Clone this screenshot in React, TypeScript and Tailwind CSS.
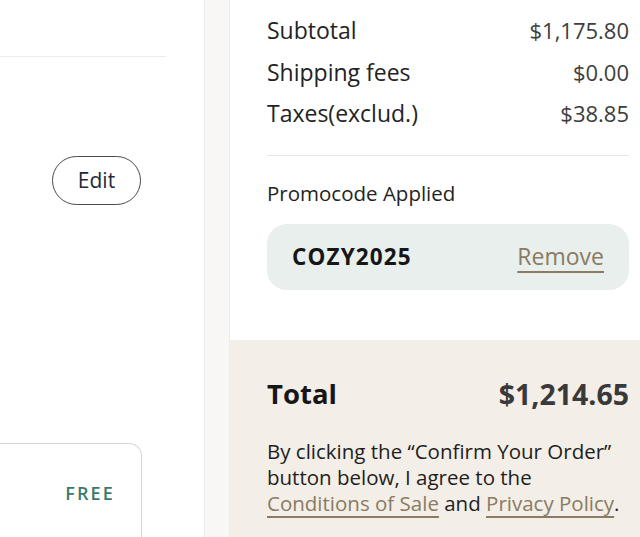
export default function App() {
  const rows = [
    { label: "Subtotal", value: "$1,175.80" },
    { label: "Shipping fees", value: "$0.00" },
    { label: "Taxes(exclud.)", value: "$38.85" },
  ];

  return (
    <div className="flex h-[537px] w-[640px] overflow-hidden bg-[#f8f7f5] font-['Open_Sans',sans-serif] text-[#232323]">
      {/* left column */}
      <div className="flex w-[205px] flex-none flex-col border-r border-[#ebebeb] bg-white">
        <div className="h-[57px] w-[166px] flex-none border-b border-[#ececec]" />
        <button className="ml-[52px] mt-[99px] flex h-[49px] w-[89px] flex-none items-center justify-center rounded-full border-[1.5px] border-[#4a4a4a] text-[21px] text-[#232b3a]">
          Edit
        </button>
        <div className="mt-[238px] h-[120px] w-[142px] flex-none rounded-tr-[13px] border-r-[1.5px] border-t-[1.5px] border-[#d6d6d6]">
          <div className="flex justify-end pr-[26px] pt-[36px] text-[18px] font-semibold tracking-[0.12em] text-[#3a7a6d]">
            FREE
          </div>
        </div>
      </div>

      <div className="w-[24px] flex-none" />

      {/* summary panel */}
      <div className="flex flex-1 flex-col border-l border-[#ebebeb] bg-white">
        <div className="flex-none pl-[37px] pr-[11px] pt-[10px]">
          {rows.map((r) => (
            <div key={r.label} className="flex justify-between text-[23px] leading-[41.5px]">
              <span>{r.label}</span>
              <span className="text-[22px] text-[#3d3d3d]">{r.value}</span>
            </div>
          ))}
          <div className="mt-[20px] border-t-[1.5px] border-[#e8e8e8]" />
          <div className="mt-[25px] text-[20.5px] leading-[24px]">Promocode Applied</div>
          <div className="mt-[19px] flex h-[66px] items-center justify-between rounded-[20px] bg-[#e8efed] pl-[25px] pr-[25px]">
            <span className="text-[22.5px] font-bold tracking-[0.05em] text-[#161616]">COZY2025</span>
            <span className="text-[23px] text-[#8a7b62] underline decoration-[2px] underline-offset-[6px]">
              Remove
            </span>
          </div>
        </div>

        <div className="mt-[50px] flex-1 bg-[#f3eee7] pl-[37px] pr-[11px] pt-[36px]">
          <div className="flex items-center justify-between leading-[36px] font-bold">
            <span className="text-[27.5px] text-[#161616]">Total</span>
            <span className="text-[28.5px] text-[#393939]">$1,214.65</span>
          </div>
          <p className="mt-[26px] text-[20.5px] leading-[26px] text-[#1e1e1e]">
            By clicking the “Confirm Your Order” button below, I agree to the{" "}
            <span className="text-[#8a7b62] underline decoration-[1.5px] underline-offset-[5px]">
              Conditions of Sale
            </span>{" "}
            and{" "}
            <span className="text-[#8a7b62] underline decoration-[1.5px] underline-offset-[5px]">
              Privacy Policy
            </span>
            .
          </p>
        </div>
      </div>
    </div>
  );
}
